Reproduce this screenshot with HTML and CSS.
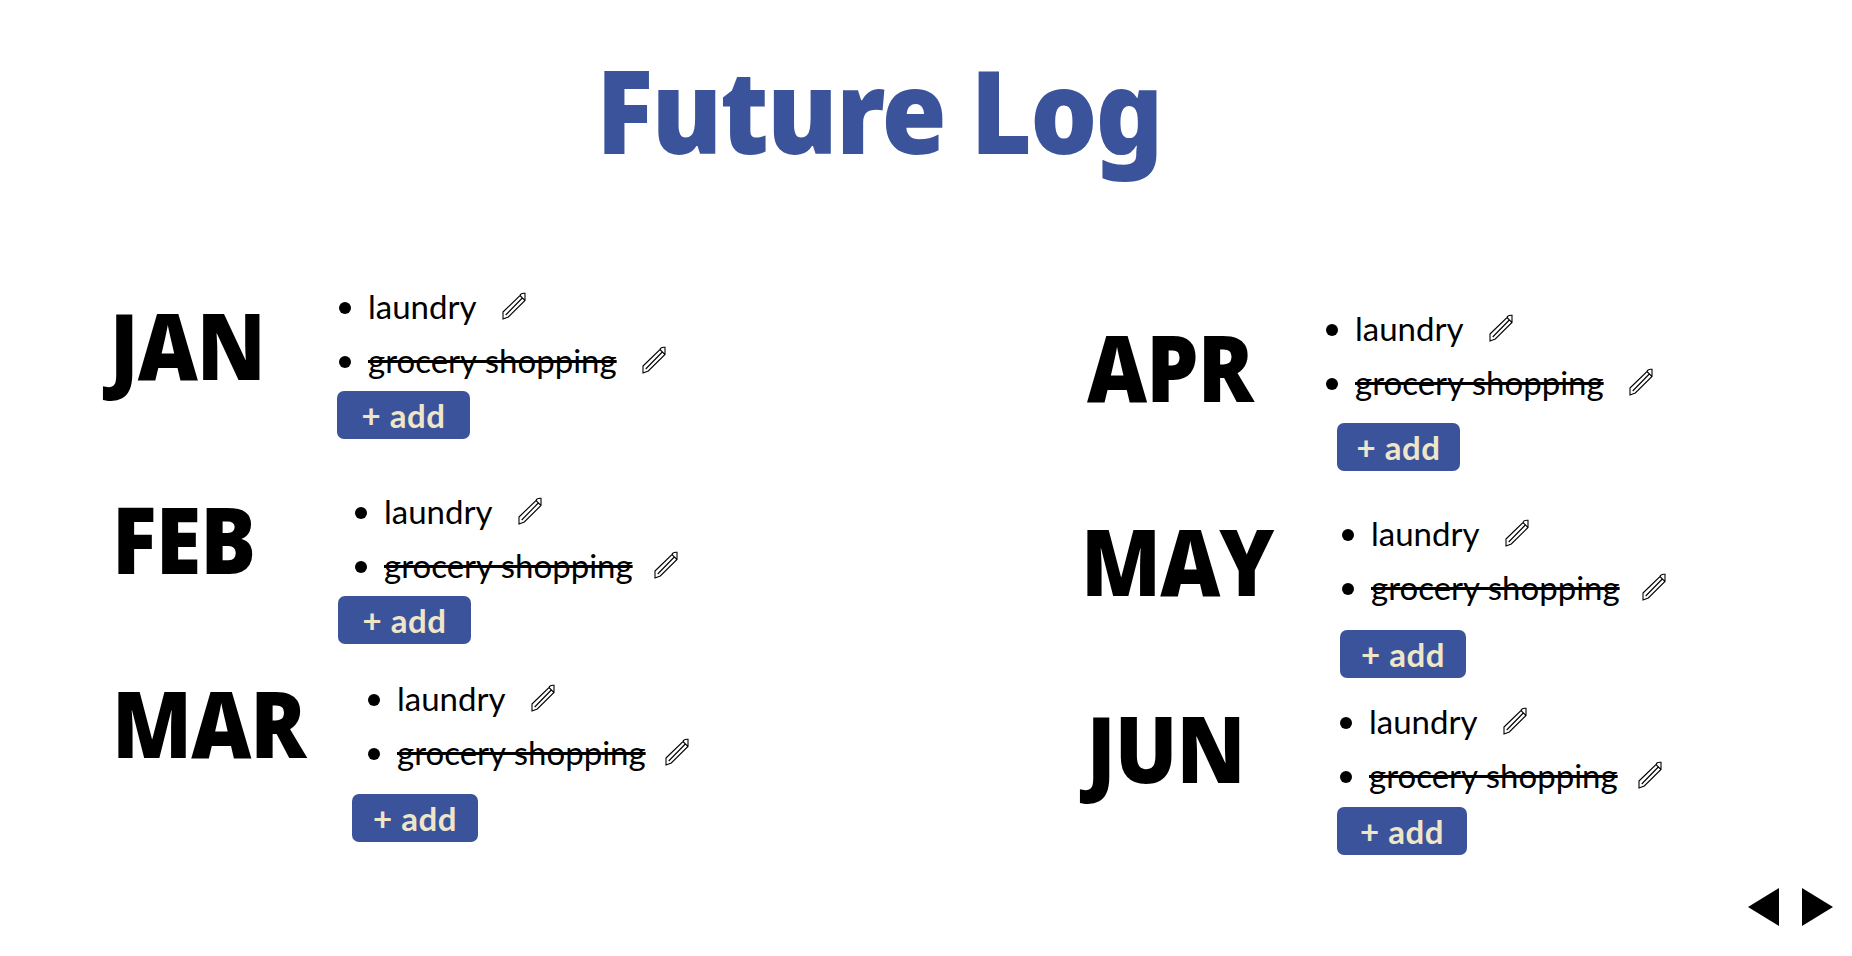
FILE: index.html
```html
<!DOCTYPE html>
<html lang="en">
<head>
    <meta charset="UTF-8">
    <title>Future Log</title>
    <link rel="stylesheet" href="styles.css">
</head>
<body>
    <svg class="icon-defs" width="0" height="0">
        <symbol id="pencil" viewBox="0 0 24 28">
            <path d="M1 20 L18 3.5 L23 8.5 L6.3 25 L1 27 Z M3.7 23 L20.3 6 M18 3.5 C18.5 1.5 20 1 23 1.3 L23 8.5" fill="none" stroke="#000" stroke-width="1.1"/>
        </symbol>
    </svg>

    <h1 class="title">Future Log</h1>

    <main class="months">
        <div class="column col-left">
            <section class="month m-jan">
                <h2>JAN</h2>
                <div class="tasks">
                    <ul>
                        <li><span>laundry</span><svg class="pencil"><use href="#pencil"/></svg></li>
                        <li><s>grocery shopping</s><svg class="pencil"><use href="#pencil"/></svg></li>
                    </ul>
                    <button class="add">+ add</button>
                </div>
            </section>
            <section class="month m-feb">
                <h2>FEB</h2>
                <div class="tasks">
                    <ul>
                        <li><span>laundry</span><svg class="pencil"><use href="#pencil"/></svg></li>
                        <li><s>grocery shopping</s><svg class="pencil"><use href="#pencil"/></svg></li>
                    </ul>
                    <button class="add">+ add</button>
                </div>
            </section>
            <section class="month m-mar">
                <h2>MAR</h2>
                <div class="tasks">
                    <ul>
                        <li><span>laundry</span><svg class="pencil"><use href="#pencil"/></svg></li>
                        <li><s>grocery shopping</s><svg class="pencil"><use href="#pencil"/></svg></li>
                    </ul>
                    <button class="add">+ add</button>
                </div>
            </section>
        </div>
        <div class="column col-right">
            <section class="month m-apr">
                <h2>APR</h2>
                <div class="tasks">
                    <ul>
                        <li><span>laundry</span><svg class="pencil"><use href="#pencil"/></svg></li>
                        <li><s>grocery shopping</s><svg class="pencil"><use href="#pencil"/></svg></li>
                    </ul>
                    <button class="add">+ add</button>
                </div>
            </section>
            <section class="month m-may">
                <h2>MAY</h2>
                <div class="tasks">
                    <ul>
                        <li><span>laundry</span><svg class="pencil"><use href="#pencil"/></svg></li>
                        <li><s>grocery shopping</s><svg class="pencil"><use href="#pencil"/></svg></li>
                    </ul>
                    <button class="add">+ add</button>
                </div>
            </section>
            <section class="month m-jun">
                <h2>JUN</h2>
                <div class="tasks">
                    <ul>
                        <li><span>laundry</span><svg class="pencil"><use href="#pencil"/></svg></li>
                        <li><s>grocery shopping</s><svg class="pencil"><use href="#pencil"/></svg></li>
                    </ul>
                    <button class="add">+ add</button>
                </div>
            </section>
        </div>
    </main>

    <nav class="arrows">
        <svg width="31" height="38" viewBox="0 0 31 38"><path d="M0 19 L31 0 V38 Z" fill="#000"/></svg>
        <svg width="31" height="38" viewBox="0 0 31 38"><path d="M31 19 L0 0 V38 Z" fill="#000"/></svg>
    </nav>
</body>
</html>
```

FILE: styles.css
```css
* {
    box-sizing: border-box;
}

html, body {
    height: 100%;
}

body {
    margin: 0;
    background: #fff;
    color: #000;
    font-family: 'Lato', 'Noto Sans', sans-serif;
    position: relative;
    overflow: hidden;
}

.icon-defs {
    position: absolute;
}

.title {
    margin: 0;
    padding: 34px 94px 0 0;
    height: 279px;
    text-align: center;
    font-family: 'Noto Sans', sans-serif;
    font-weight: 900;
    font-size: 116px;
    line-height: 150px;
    letter-spacing: -2px;
    color: #3a539b;
    transform: scaleX(.91);
    transform-origin: 879px 0;
}

.months {
    display: flex;
}

.column {
    display: flex;
    flex-direction: column;
}

.col-left {
    width: 1081px;
    padding-left: 104px;
}

.col-right {
    padding-top: 22px;
}

.month {
    display: flex;
    align-items: flex-start;
}

.month h2 {
    margin: 0;
    font-family: 'Open Sans', sans-serif;
    font-stretch: 89%;
    font-size: 92px;
    font-weight: 800;
    line-height: 100px;
    letter-spacing: -1px;
    white-space: nowrap;
}

.h2-fit, .month h2 {
    transform: scaleX(.9);
    transform-origin: 0 0;
}

.tasks {
    display: flex;
    flex-direction: column;
    align-items: flex-start;
}

ul {
    margin: 0;
    padding: 0 0 0 2px;
    list-style: none;
    font-size: 33px;
    font-weight: 400;
    line-height: 54px;
}

li {
    display: flex;
    align-items: center;
    white-space: nowrap;
}

li::before {
    content: '';
    width: 12px;
    height: 12px;
    margin: 4px 17px 0 0;
    border-radius: 50%;
    background: #000;
}

.pencil {
    width: 24px;
    height: 28px;
    margin-left: 25px;
}

.add {
    height: 48px;
    padding: 0;
    border: none;
    border-radius: 7px;
    background: #3a539b;
    color: #efe6c9;
    font-family: inherit;
    font-size: 33px;
    font-weight: 700;
    letter-spacing: .5px;
}

.m-jan { height: 205px; }
.m-jan h2 { width: 233px; margin-top: 16px; padding-left: 6px; }
.m-jan .add { width: 133px; margin-top: 4px; }

.m-feb { height: 187px; padding-left: 8px; }
.m-feb h2 { width: 226px; margin-top: 5px; }
.m-feb ul { padding-left: 17px; }
.m-feb li:nth-child(2) .pencil { margin-left: 21px; }
.m-feb .add { width: 133px; margin-top: 4px; }

.m-mar { padding-left: 8px; }
.m-mar h2 { width: 240px; margin-top: 2px; }
.m-mar ul { padding-left: 16px; }
.m-mar li:nth-child(2) .pencil { margin-left: 19px; }
.m-mar .add { width: 126px; margin-top: 15px; }

.m-apr { height: 205px; padding-left: 6px; }
.m-apr h2 { width: 239px; margin-top: 16px; }
.m-apr ul { padding-left: 0; }
.m-apr .add { width: 123px; margin: 14px 0 0 11px; }

.m-may { height: 188px; }
.m-may h2 { width: 259px; margin-top: 5px; }
.m-may li:nth-child(2) .pencil { margin-left: 22px; }
.m-may .add { width: 126px; margin-top: 16px; }

.m-jun h2 { width: 256px; margin-top: 4px; padding-left: 6px; }
.m-jun ul { padding-left: 3px; }
.m-jun li:nth-child(2) .pencil { margin-left: 20px; }
.m-jun .add { width: 130px; margin-top: 5px; }

.arrows {
    position: absolute;
    right: 19px;
    bottom: 30px;
    display: flex;
    gap: 23px;
}
```
